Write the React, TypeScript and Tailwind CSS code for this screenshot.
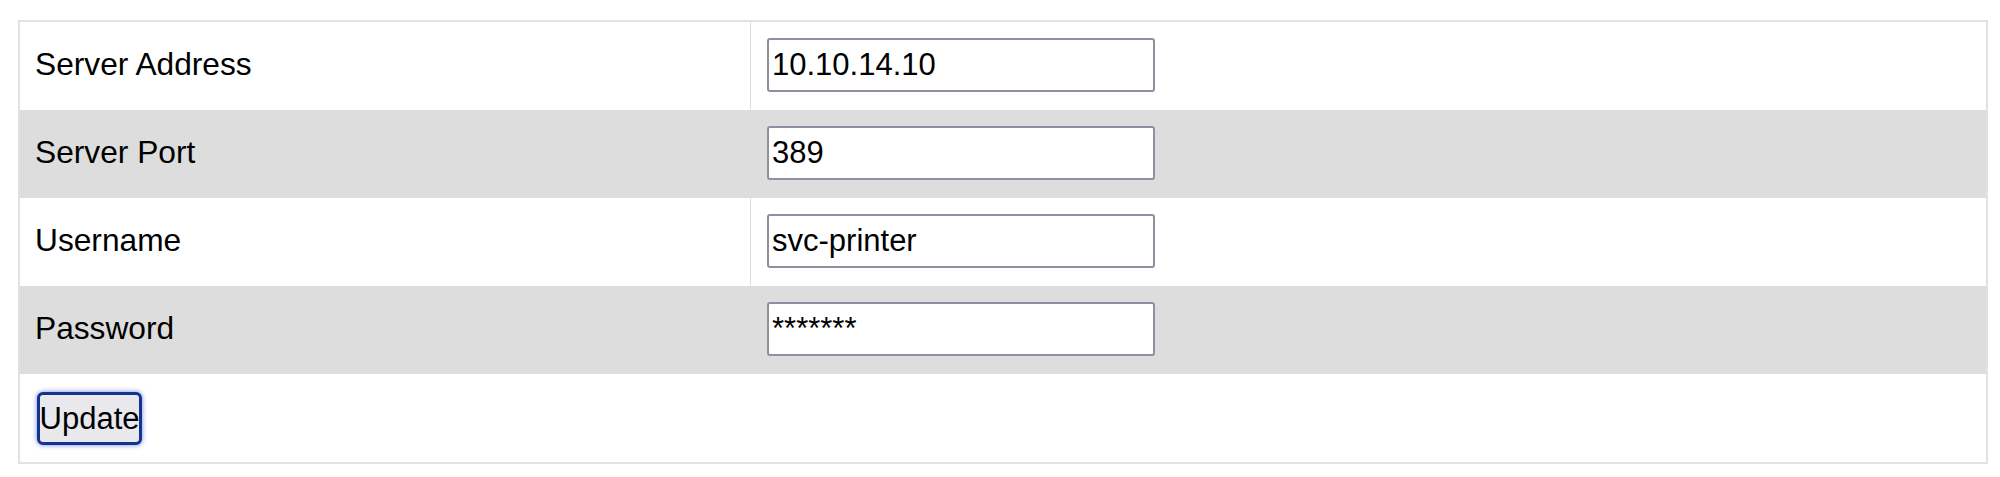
import React from "react";

const rows = [
  { label: "Server Address", value: "10.10.14.10", grey: false },
  { label: "Server Port", value: "389", grey: true },
  { label: "Username", value: "svc-printer", grey: false },
  { label: "Password", value: "*******", grey: true },
];

export default function App() {
  return (
    <div className="w-[2000px] h-[477px] bg-white pt-[20px] pl-[18px] font-['Liberation_Sans',Arial,sans-serif] text-black">
      <div className="w-[1970px] border-2 border-[#e2e2e2] flex flex-col">
        {rows.map((r) => (
          <div
            key={r.label}
            className={`flex h-[88px] ${r.grey ? "bg-[#dddddd]" : "bg-white"}`}
          >
            <div className="w-[731px] flex items-center pl-[15px] pb-[3px] text-[31.7px] leading-none border-r border-[#dddddd]">
              {r.label}
            </div>
            <div className="flex-1 flex items-center pl-[16px] pb-[2px]">
              <input
                readOnly
                defaultValue={r.value}
                className="w-[388px] h-[54px] bg-white border-2 border-[#8f8f9d] rounded-[3px] px-[3px] text-[31px] leading-none text-black outline-none font-['Liberation_Sans',Arial,sans-serif]"
              />
            </div>
          </div>
        ))}
        <div className="flex h-[88px] items-center bg-white pl-[17px]">
          <button className="w-[105px] h-[53px] flex items-center justify-center bg-[#e9e9ed] border-[3px] border-[#15328f] rounded-[6px] shadow-[0_0_5px_rgba(40,80,220,0.7)] text-[31px] leading-none text-black font-['Liberation_Sans',Arial,sans-serif]">
            Update
          </button>
        </div>
      </div>
    </div>
  );
}
